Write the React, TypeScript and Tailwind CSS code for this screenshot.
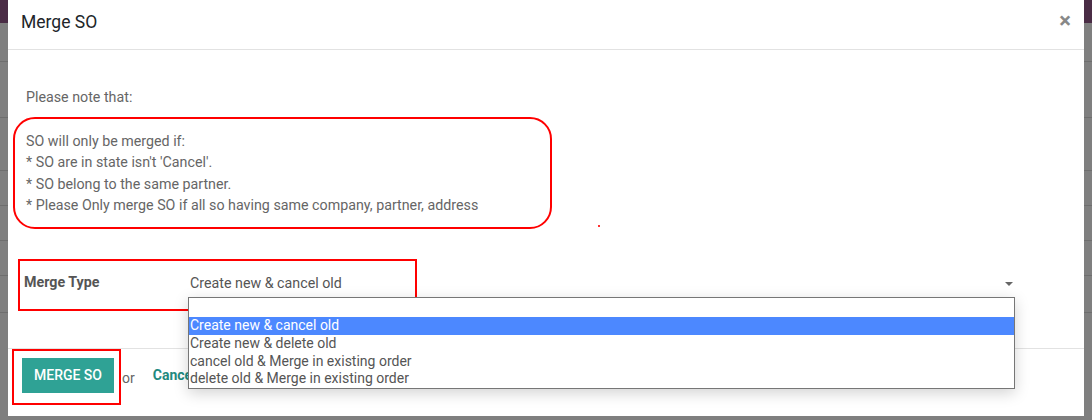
import React from "react";

const rules = [
  "SO will only be merged if:",
  "* SO are in state isn't 'Cancel'.",
  "* SO belong to the same partner.",
  "* Please Only merge SO if all so having same company, partner, address",
];

const mergeTypes = [
  "Create new & cancel old",
  "Create new & delete old",
  "cancel old & Merge in existing order",
  "delete old & Merge in existing order",
];

// rows of the list view that sits behind the dialog
const bgLines = [61, 117, 170, 205, 240, 275, 312];

const Backdrop: React.FC = () => (
  <div className="absolute inset-0 bg-[#7f7f7f]">
    <div className="h-[23px] bg-[#4a2c45]" />
    {bgLines.map((y) => (
      <div key={y} className="absolute left-0 right-0 h-px bg-[#6e6e6e]" style={{ top: y }} />
    ))}
  </div>
);

const OptionList: React.FC = () => (
  <div className="absolute left-[180px] top-[247px] w-[827px] border border-[#767676] bg-white shadow-[0_4px_14px_rgba(0,0,0,0.18)] text-[14px] leading-[17.5px] text-[#555]">
    <div className="h-[19px]" />
    {mergeTypes.map((t, i) => (
      <div
        key={t}
        className={
          i === 0
            ? "h-[18px] bg-[#4c88ff] pl-[1px] text-white"
            : "h-[17.5px] pl-[1px]"
        }
      >
        {t}
      </div>
    ))}
  </div>
);

export default function App() {
  return (
    <div
      className="relative w-[1092px] h-[420px] overflow-hidden"
      style={{ fontFamily: "Roboto, 'Liberation Sans', sans-serif" }}
    >
      <Backdrop />
      <div className="relative mx-[8px] h-[416px] bg-white flex flex-col">
        {/* header */}
        <div className="h-[50px] shrink-0 border-b border-[#e2e2e2] flex items-center justify-between pl-[13px] pr-[13px]">
          <span className="text-[17.5px] text-[#212529] -mt-[5px]">Merge SO</span>
          <span className="text-[22px] font-bold leading-none text-[#888] -mt-[8px]">×</span>
        </div>

        {/* body */}
        <div className="flex-1 relative pt-[37px] text-[14.25px] text-[#666]">
          <div className="pl-[18px] leading-[21px]">Please note that:</div>
          <div className="ml-[5px] mt-[9px] w-[539px] h-[112px] rounded-[22px] border-2 border-[#f00] pt-[12px] pl-[11px] leading-[21.4px]">
            {rules.map((r) => (
              <div key={r}>{r}</div>
            ))}
          </div>
          <div className="absolute left-[590px] top-[175px] w-[2px] h-[2px] bg-[#f33]" />

          <div className="relative mt-[30px] ml-[10px] w-[399px] h-[52px] border-2 border-[#f00] flex items-center">
            <span className="pl-[4px] -mt-[4px] font-bold text-[#555]">Merge Type</span>
          </div>
          <div className="absolute left-[182px] top-[223px] w-[826px] flex items-center justify-between text-[#555]">
            <span>Create new &amp; cancel old</span>
            <span className="w-0 h-0 border-l-[4px] border-r-[4px] border-t-[4px] border-l-transparent border-r-transparent border-t-[#666] mr-[3px]" />
          </div>
          <OptionList />
        </div>

        {/* footer */}
        <div className="h-[68px] shrink-0 border-t border-[#e2e2e2] flex items-start pl-[4px]">
          <div className="w-[109px] h-[56px] border-2 border-[#f00] flex items-center justify-center">
            <button className="w-[92px] h-[35px] bg-[#2fa295] text-white text-[14px] font-medium mt-[-3px] ml-[3px]">
              MERGE SO
            </button>
          </div>
          <span className="mt-[19px] ml-[1px] text-[14px] text-[#666]">or</span>
          <span className="mt-[16px] ml-[18px] text-[14px] font-bold text-[#1f8a80]">Cancel</span>
        </div>
      </div>
    </div>
  );
}
